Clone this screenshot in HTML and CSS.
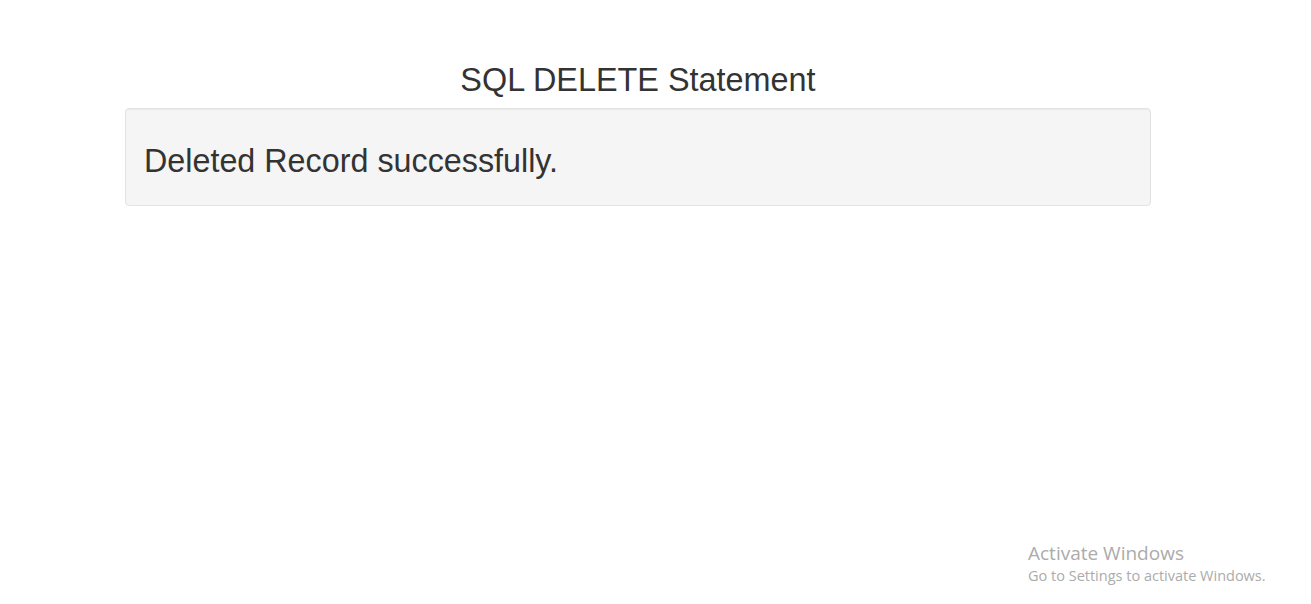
FILE: index.html
```html
<!DOCTYPE html>
<html>
<head>
<meta charset="utf-8">
<link rel="stylesheet" href="styles.css">
</head>
<body>
<div class="container">
  <h2 class="title">SQL DELETE Statement</h2>
  <div class="well">
    <h1 class="msg">Deleted Record successfully.</h1>
  </div>
</div>
<div class="watermark">
  <div class="wm-title">Activate Windows</div>
  <div class="wm-sub">Go to Settings to activate Windows.</div>
</div>
</body>
</html>
```
FILE: styles.css
```css
html, body {
  margin: 0;
  padding: 0;
  background: #fff;
  height: 100%;
}
body {
  font-family: "Liberation Sans", Arial, sans-serif;
  color: #333;
  position: relative;
  overflow: hidden;
}
.container {
  width: 1026px;
  margin-left: 125px;
  padding-top: 1px;
}
.title {
  margin: 62px 0 10px;
  font-size: 32.4px;
  line-height: 35px;
  font-weight: 400;
  text-align: center;
}
.well {
  background: #f5f5f5;
  border: 1px solid #e3e3e3;
  border-radius: 4px;
  box-shadow: inset 0 1px 1px rgba(0,0,0,0.05);
  padding: 19px 18px;
}
.msg {
  margin: 15px 0 7px;
  font-size: 32.3px;
  line-height: 36px;
  font-weight: 400;
}
.watermark {
  position: absolute;
  left: 1028px;
  top: 541px;
  font-family: "Open Sans", "Noto Sans", sans-serif;
  color: #ababab;
}
.wm-title {
  font-size: 19px;
  line-height: 25px;
}
.wm-sub {
  font-size: 14.5px;
  line-height: 20px;
}
```
